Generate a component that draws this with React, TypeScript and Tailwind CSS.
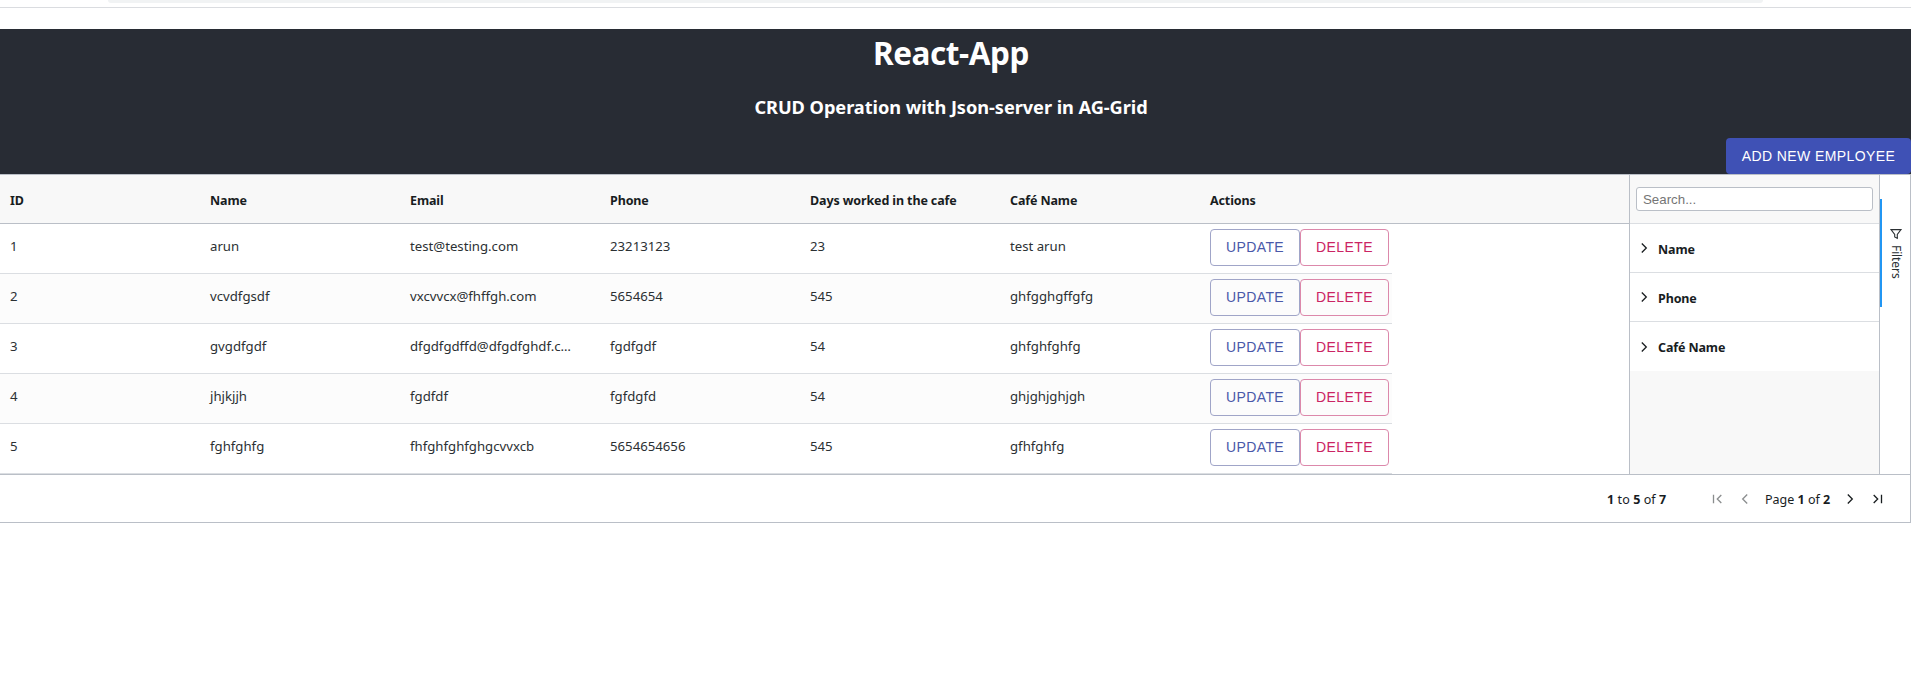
import React from "react";

type Row = { id: string; name: string; email: string; phone: string; days: string; cafe: string };

const rows: Row[] = [
  { id: "1", name: "arun", email: "test@testing.com", phone: "23213123", days: "23", cafe: "test arun" },
  { id: "2", name: "vcvdfgsdf", email: "vxcvvcx@fhffgh.com", phone: "5654654", days: "545", cafe: "ghfgghgffgfg" },
  { id: "3", name: "gvgdfgdf", email: "dfgdfgdffd@dfgdfghdf.com", phone: "fgdfgdf", days: "54", cafe: "ghfghfghfg" },
  { id: "4", name: "jhjkjjh", email: "fgdfdf", phone: "fgfdgfd", days: "54", cafe: "ghjghjghjgh" },
  { id: "5", name: "fghfghfg", email: "fhfghfghfghgcvvxcb", phone: "5654654656", days: "545", cafe: "gfhfghfg" },
];

const columns = ["ID", "Name", "Email", "Phone", "Days worked in the cafe", "Café Name", "Actions"];
const filters = ["Name", "Phone", "Café Name"];

function Chevron({ className, d }: { className?: string; d: string }) {
  return (
    <svg viewBox="0 0 16 16" className={`block h-4 w-4 shrink-0 ${className ?? ""}`} fill="none" stroke="currentColor" strokeWidth="1.3">
      <path d={d} />
    </svg>
  );
}

function GridRow({ row, odd }: { row: Row; odd: boolean }) {
  return (
    <div className={`flex h-[50px] w-[1392px] border-b border-[#dbdee2] ${odd ? "bg-[#fcfcfc]" : "bg-white"}`}>
      {[row.id, row.name, row.email, row.phone, row.days, row.cafe].map((v, i) => (
        <div key={i} className="w-[200px] shrink-0 truncate pr-[22px] pl-[10px] text-[13.2px] leading-[45px] text-[#2b3033]">
          {v}
        </div>
      ))}
      <div className="flex pt-[5px] pl-[10px] font-['Liberation_Sans',sans-serif] text-[14px] tracking-[0.4px]">
        <button className="h-[37px] w-[90px] rounded-[4px] border border-[#a0a5c8] text-[#4a59a9]">UPDATE</button>
        <button className="h-[37px] w-[89px] rounded-[4px] border border-[#dc88ab] text-[#cb2463]">DELETE</button>
      </div>
    </div>
  );
}

export default function App() {
  return (
    <div className="h-[689px] w-[1911px] overflow-hidden bg-white font-['Noto_Sans',sans-serif] text-[#181d1f]">
      <div className="h-[8px] border-b border-[#dadce0] pl-[108px]">
        <div className="h-[3px] w-[1655px] rounded-b-[4px] bg-[#f1f3f4]" />
      </div>
      <header className="mt-[21px] flex h-[145px] flex-col bg-[#282c34] text-center text-white">
        <h1 className="pr-[9px] pt-[2px] text-[31.5px] leading-[43px] font-bold tracking-[-0.45px]">React-App</h1>
        <h3 className="mt-[20px] pr-[9px] text-[18.2px] leading-[26px] font-bold tracking-[-0.05px]">
          CRUD Operation with Json-server in AG-Grid
        </h3>
        <button className="mt-auto h-[36px] w-[185px] self-end rounded-[4px] bg-[#3f51b5] font-['Liberation_Sans',sans-serif] text-[14px] tracking-[0.4px]">
          ADD NEW EMPLOYEE
        </button>
      </header>
      <main className="h-[349px] border-t border-r border-b border-[#babfc7]">
        <div className="flex h-[299px]">
          <section className="w-[1629px]">
            <div className="flex h-[49px] border-b border-[#babfc7] bg-[#f8f8f8]">
              {columns.map((c) => (
                <div key={c} className="w-[200px] pl-[10px] text-[12.5px] leading-[52px] font-bold tracking-[-0.12px] whitespace-nowrap">
                  {c}
                </div>
              ))}
            </div>
            {rows.map((r, i) => (
              <GridRow key={r.id} row={r} odd={i % 2 === 1} />
            ))}
          </section>
          <aside className="w-[251px] border-r border-l border-[#babfc7] bg-[#f8f8f8]">
            <div className="h-[49px] border-b border-[#dbdee2] px-[6px] pt-[12px]">
              <input
                placeholder="Search..."
                className="block h-[24px] w-[237px] rounded-[3px] border border-[#babfc7] bg-white px-[6px] font-['Liberation_Sans',sans-serif] text-[13.3px] placeholder:text-[#757575]"
              />
            </div>
            {filters.map((f, i) => (
              <div
                key={f}
                className={`flex h-[49px] items-center bg-white pl-[6px] text-[12.5px] font-bold tracking-[-0.12px] ${i < 2 ? "border-b border-[#dbdee2]" : ""}`}
              >
                <Chevron d="M5.8 3.5 10.3 8l-4.5 4.5" className="mr-[6px]" />
                <span className="pt-[4px]">{f}</span>
              </div>
            ))}
          </aside>
          <nav className="w-[30px] pt-[24px]">
            <button className="flex h-[108px] w-[30px] flex-col items-center border-l-2 border-[#2196f3] pt-[27px] text-[#2b3033]">
              <svg viewBox="0 0 16 16" className="block h-4 w-4" fill="none" stroke="currentColor" strokeWidth="1.1">
                <path d="M3 3.6h10L9.3 8.4v4L6.7 11V8.4z" />
              </svg>
              <span className="mt-[3px] text-[12px] leading-[16px] tracking-[-0.1px] [writing-mode:vertical-rl]">Filters</span>
            </button>
          </nav>
        </div>
        <footer className="flex h-[48px] items-center border-t border-[#babfc7] text-[12.5px]">
          <div className="ml-[1607px] w-[102px] pt-[3px] tracking-[0.08px] whitespace-nowrap">
            <b>1</b> to <b>5</b> of <b>7</b>
          </div>
          <Chevron d="M4.5 3.8v8.4M12.3 4 8.3 8l4 4" className="opacity-50" />
          <Chevron d="M10.2 3.5 5.7 8l4.5 4.5" className="ml-[12px] opacity-50" />
          <div className="ml-[12px] w-[77px] pt-[3px] whitespace-nowrap">
            Page <b>1</b> of <b>2</b>
          </div>
          <Chevron d="M5.8 3.5 10.3 8l-4.5 4.5" className="" />
          <Chevron d="M11.5 3.8v8.4M3.7 4l4 4-4 4" className="ml-[12px]" />
        </footer>
      </main>
    </div>
  );
}
